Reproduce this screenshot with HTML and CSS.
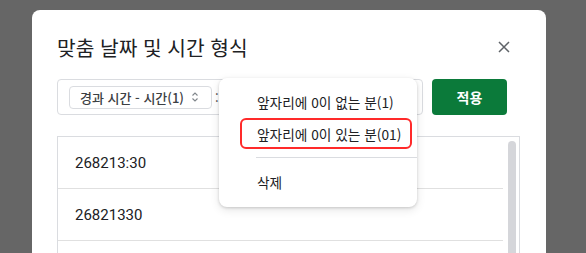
FILE: index.html
```html
<!DOCTYPE html>
<html lang="ko">
<head>
<meta charset="utf-8">
<link rel="stylesheet" href="styles.css">
</head>
<body>
<div class="dialog">
  <div class="header">
    <h1 class="title">맞춤 날짜 및 시간 형식</h1>
    <svg class="close" width="12" height="12" viewBox="0 0 12 12"><path d="M1 1L11 11M11 1L1 11" stroke="#5f6368" stroke-width="1.5" fill="none"/></svg>
  </div>
  <div class="toolbar">
    <div class="format-box">
      <div class="chip">
        <span>경과 시간 - 시간(1)</span>
        <svg class="updown" width="8" height="12" viewBox="0 0 8 12"><path d="M1.5 4.5L4 2L6.5 4.5M1.5 7.5L4 10L6.5 7.5" stroke="#80868b" stroke-width="1.1" fill="none"/></svg>
      </div>
      <span class="colon">:</span>
    </div>
    <button class="apply">적용</button>
    <div class="menu">
      <div class="item">앞자리에 0이 없는 분(1)</div>
      <div class="item">앞자리에 0이 있는 분(01)</div>
      <div class="sep"></div>
      <div class="item">삭제</div>
      <div class="highlight"></div>
    </div>
  </div>
  <div class="list">
    <div class="rows">
      <div class="row">268213:30</div>
      <div class="row">26821330</div>
      <div class="row"></div>
    </div>
    <div class="scrollbar"></div>
  </div>
</div>
</body>
</html>
```
FILE: styles.css
```css
html, body {
  margin: 0;
  padding: 0;
  height: 253px;
  overflow: hidden;
}
body {
  background: #666666;
  padding: 10px 0 0 32px;
  font-family: "Noto Sans CJK KR", Roboto, sans-serif;
  color: #202124;
}
.dialog {
  width: 514px;
  height: 320px;
  background: #fff;
  border-radius: 8px;
  padding: 0 0 0 25px;
  box-sizing: border-box;
}
.header {
  display: flex;
  align-items: center;
  justify-content: space-between;
  padding: 14px 36px 0 0;
  height: 46px;
  box-sizing: content-box;
}
.title {
  margin: 0;
  font-size: 20.3px;
  font-weight: 400;
  line-height: 28px;
}
.close {
  display: block;
}
.toolbar {
  position: relative;
  display: flex;
  gap: 9px;
  margin-top: 9px;
  height: 36px;
}
.format-box {
  width: 366px;
  height: 36px;
  border: 1px solid #dadce0;
  border-radius: 4px;
  box-sizing: border-box;
  display: flex;
  align-items: center;
  padding-left: 11px;
}
.chip {
  display: flex;
  align-items: center;
  width: 143px;
  height: 23px;
  box-sizing: border-box;
  border: 1px solid #dadce0;
  border-radius: 4px;
  padding: 0 0 0 10px;
  font-size: 13px;
  font-weight: 500;
  color: #3c4043;
  gap: 7px;
}
.colon {
  margin-left: 3px;
  font-size: 13px;
  color: #3c4043;
}
.apply {
  width: 75px;
  height: 36px;
  border: none;
  border-radius: 4px;
  background: #0b7a3a;
  color: #fff;
  font-family: "Noto Sans CJK KR", sans-serif;
  font-size: 14px;
  font-weight: 700;
  padding: 0;
}
.menu {
  position: absolute;
  left: 162px;
  top: -1px;
  width: 198px;
  height: 129px;
  background: #fff;
  border-radius: 8px;
  box-shadow: 0 1px 3px rgba(0,0,0,0.16), 0 3px 10px rgba(0,0,0,0.10);
  padding-top: 8px;
  box-sizing: border-box;
}
.item {
  height: 32px;
  line-height: 32px;
  padding-left: 38px;
  font-size: 13.7px;
  color: #202124;
}
.sep {
  height: 1px;
  background: #dadce0;
  margin: 7px 0 8px 37px;
}
.highlight {
  position: absolute;
  left: 21px;
  top: 40px;
  width: 172px;
  height: 31px;
  box-sizing: border-box;
  border: 2px solid #ff2a2a;
  border-radius: 6px;
}
.list {
  margin-top: 21px;
  width: 463px;
  height: 200px;
  border: 1px solid #dadce0;
  box-sizing: border-box;
  display: flex;
}
.rows {
  width: 445px;
}
.row {
  height: 52px;
  border-bottom: 1px solid #e0e0e0;
  box-sizing: border-box;
  padding-left: 17px;
  display: flex;
  align-items: center;
  font-family: Roboto, sans-serif;
  font-size: 15px;
  color: #202124;
}
.scrollbar {
  width: 8px;
  height: 140px;
  margin: 4px 0 0 5px;
  background: #d5d6da;
  border-radius: 4px;
}
```
